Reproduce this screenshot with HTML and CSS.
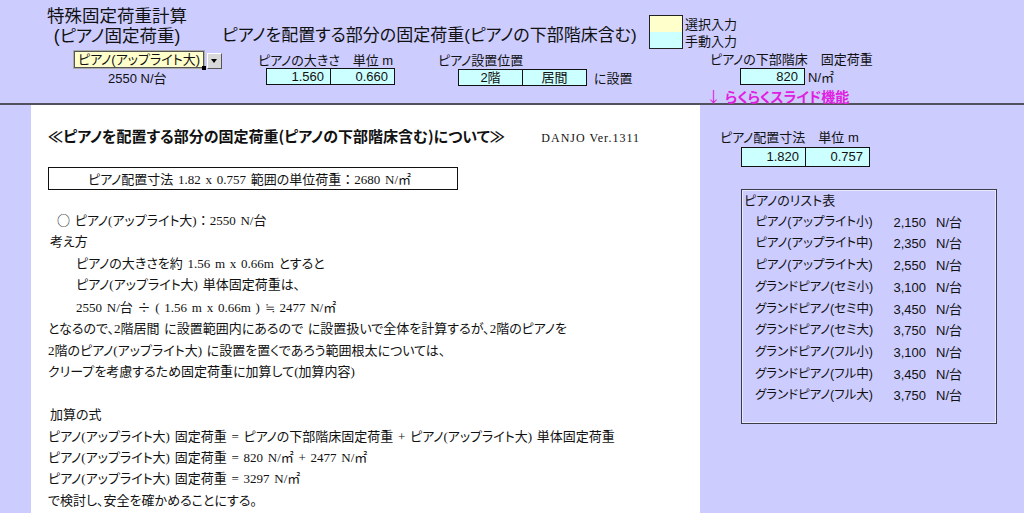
FILE: index.html
```html
<!DOCTYPE html>
<html lang="ja">
<head>
    <meta charset="UTF-8">
    <meta name="viewport" content="width=device-width, initial-scale=1.0">
    <title>特殊固定荷重計算</title>
    <link rel="stylesheet" href="styles.css">
</head>
<body>
    <header class="top">
        <div class="brand">
            <h1>特殊固定荷重計算<br>(ピアノ固定荷重)</h1>
            <div class="select">
                <span class="select-box">ピアノ(アップライト大)</span>
                <span class="select-btn"></span>
            </div>
            <div class="select-value">2550 N/台</div>
        </div>

        <div class="main-head">
            <h2>ピアノを配置する部分の固定荷重(ピアノの下部階床含む)</h2>
            <div class="fields">
                <div class="field field-size">
                    <div class="label">ピアノの大きさ　単位 m</div>
                    <div class="cells">
                        <span class="cell num">1.560</span>
                        <span class="cell num">0.660</span>
                    </div>
                </div>
                <div class="field field-place">
                    <div class="label">ピアノ設置位置</div>
                    <div class="cells">
                        <span class="cell center">2階</span>
                        <span class="cell center">居間</span>
                        <span class="after">に設置</span>
                    </div>
                </div>
            </div>
        </div>

        <div class="side-head">
            <div class="legend">
                <div class="legend-row"><span class="swatch yellow"></span>選択入力</div>
                <div class="legend-row"><span class="swatch cyan"></span>手動入力</div>
            </div>
            <div class="field field-floor">
                <div class="label">ピアノの下部階床　固定荷重</div>
                <div class="cells">
                    <span class="cell num">820</span>
                    <span class="after unit">N/㎡</span>
                </div>
            </div>
            <div class="slide"><span class="arrow">↓</span> らくらくスライド機能</div>
        </div>
    </header>

    <div class="content">
        <div class="gutter"></div>

        <div class="sheet">
            <div class="sheet-head">
                <h3>≪ピアノを配置する部分の固定荷重(ピアノの下部階床含む)について≫</h3>
                <span class="version">DANJO Ver.1311</span>
            </div>
            <div class="summary">ピアノ配置寸法 1.82 x 0.757 範囲の単位荷重<span class="wide">：</span>2680 N/㎡</div>

            <div class="text">
                <p class="mark"><span class="wide">○</span> ピアノ(アップライト大)<span class="wide">：</span>2550 N/台</p>
                <p class="sub">考え方</p>
                <p class="indent">ピアノの大きさを約 1.56 m x 0.66m とすると</p>
                <p class="indent">ピアノ(アップライト大) 単体固定荷重は、</p>
                <p class="indent">2550 N/台 <span class="wide">÷</span> ( 1.56 m x 0.66m ) <span class="wide">≒</span> 2477 N/㎡</p>
                <p>となるので、2階居間 に設置範囲内にあるので に設置扱いで全体を計算するが、2階のピアノを</p>
                <p>2階のピアノ(アップライト大) に設置を置くであろう範囲根太については、</p>
                <p>クリープを考慮するため固定荷重に加算して(加算内容)</p>
                <p class="blank">&nbsp;</p>
                <p class="sub">加算の式</p>
                <p>ピアノ(アップライト大) 固定荷重 = ピアノの下部階床固定荷重 + ピアノ(アップライト大) 単体固定荷重</p>
                <p>ピアノ(アップライト大) 固定荷重 = 820 N/㎡ + 2477 N/㎡</p>
                <p>ピアノ(アップライト大) 固定荷重 = 3297 N/㎡</p>
                <p>で検討し、安全を確かめることにする。</p>
            </div>
        </div>

        <aside class="side">
            <div class="field field-dim">
                <div class="label">ピアノ配置寸法　単位 m</div>
                <div class="cells">
                    <span class="cell num">1.820</span>
                    <span class="cell num">0.757</span>
                </div>
            </div>

            <div class="list">
                <div class="list-title">ピアノのリスト表</div>
                <div class="list-row"><span class="name">ピアノ(アップライト小)</span><span class="val">2,150</span><span class="unit">N/台</span></div>
                <div class="list-row"><span class="name">ピアノ(アップライト中)</span><span class="val">2,350</span><span class="unit">N/台</span></div>
                <div class="list-row"><span class="name">ピアノ(アップライト大)</span><span class="val">2,550</span><span class="unit">N/台</span></div>
                <div class="list-row"><span class="name">グランドピアノ(セミ小)</span><span class="val">3,100</span><span class="unit">N/台</span></div>
                <div class="list-row"><span class="name">グランドピアノ(セミ中)</span><span class="val">3,450</span><span class="unit">N/台</span></div>
                <div class="list-row"><span class="name">グランドピアノ(セミ大)</span><span class="val">3,750</span><span class="unit">N/台</span></div>
                <div class="list-row"><span class="name">グランドピアノ(フル小)</span><span class="val">3,100</span><span class="unit">N/台</span></div>
                <div class="list-row"><span class="name">グランドピアノ(フル中)</span><span class="val">3,450</span><span class="unit">N/台</span></div>
                <div class="list-row"><span class="name">グランドピアノ(フル大)</span><span class="val">3,750</span><span class="unit">N/台</span></div>
            </div>
        </aside>
    </div>
</body>
</html>
```

FILE: styles.css
```css
body {
    margin: 0;
    width: 1024px;
    height: 513px;
    overflow: hidden;
    background-color: #ccccff;
    color: #111;
    font-family: "Liberation Sans", "Noto Sans CJK JP", sans-serif;
    font-feature-settings: "palt";
    font-size: 13px;
}
h1, h2, h3, p {
    margin: 0;
    font-weight: normal;
}

/* top bar */
.top {
    display: flex;
    height: 103px;
    border-bottom: 2px solid #52525e;
    box-sizing: content-box;
}
.brand {
    width: 175px;
    padding-left: 47px;
}
.brand h1 {
    width: 140px;
    padding-top: 6px;
    font-size: 17.5px;
    line-height: 20px;
    text-align: center;
    white-space: nowrap;
}
.select {
    display: flex;
    margin: 5px 0 0 27px;
    height: 17px;
}
.select-box {
    position: relative;
    width: 128px;
    height: 15px;
    line-height: 15px;
    background-color: #ffffcc;
    border: 1px solid #555;
    box-shadow: 0 0 0 1px #aaa;
    text-align: center;
    font-size: 13px;
}
.select-box::after {
    content: "";
    position: absolute;
    right: -3px;
    bottom: -3px;
    width: 4px;
    height: 4px;
    background-color: #000;
}
.select-btn {
    position: relative;
    width: 13px;
    height: 14px;
    margin: 2px 0 0 3px;
    background-color: #d8d8d8;
    border: 1px solid #fff;
    border-right-color: #555;
    border-bottom-color: #555;
}
.select-btn::after {
    content: "";
    position: absolute;
    left: 3px;
    top: 5px;
    border-left: 3px solid transparent;
    border-right: 3px solid transparent;
    border-top: 4px solid #000;
}
.select-value {
    margin: 4px 0 0 61px;
    font-size: 13px;
    line-height: 14px;
}

.main-head {
    width: 427px;
}
.main-head h2 {
    padding-top: 26px;
    font-size: 17px;
    line-height: 20px;
}
.fields {
    display: flex;
    margin-top: 7px;
}
.field .label {
    font-size: 13px;
    line-height: 15px;
}
.cells {
    display: flex;
    align-items: center;
}
.cell {
    box-sizing: border-box;
    width: 65px;
    height: 17px;
    line-height: 15px;
    background-color: #ccffff;
    border: 1px solid #111;
    font-size: 13px;
}
.cell + .cell {
    border-left: none;
    width: 64px;
}
.cell.num {
    text-align: right;
    padding-right: 6px;
}
.cell.center {
    text-align: center;
}
.after {
    margin-left: 7px;
}
.after.unit {
    margin-left: 3px;
}
.field-size {
    width: 180px;
    margin-left: 36px;
}
.field-size .cells {
    margin-left: 8px;
}
.field-place .cells {
    margin-left: 20px;
}

.legend {
    padding-top: 15px;
}
.legend-row {
    display: flex;
    align-items: center;
    height: 17px;
    font-size: 13px;
}
.swatch {
    box-sizing: border-box;
    width: 34px;
    height: 18px;
    margin-right: 2px;
    border: 1px solid #222;
}
.legend-row + .legend-row .swatch {
    border-top: none;
    height: 17px;
}
.swatch.yellow {
    background-color: #ffffcc;
}
.swatch.cyan {
    background-color: #ccffff;
}
.field-floor {
    margin: 3px 0 0 61px;
}
.field-floor .cells {
    margin-left: 30px;
}
.slide {
    margin: 1px 0 0 57px;
    color: #e020e0;
    font-weight: bold;
    font-size: 14px;
    line-height: 17px;
}
.slide .arrow {
    font-family: "Noto Sans CJK JP", sans-serif;
    font-weight: normal;
    font-size: 15px;
}

/* lower area */
.content {
    display: flex;
    height: 408px;
}
.gutter {
    width: 31px;
}
.sheet {
    width: 652px;
    padding: 20px 0 0 17px;
    background-color: #fff;
    font-family: "Liberation Serif", "Noto Sans CJK JP", serif;
    word-spacing: 1.5px;
}
.wide {
    font-family: "Noto Sans CJK JP", sans-serif;
    font-feature-settings: normal;
}
.sheet-head {
    display: flex;
    align-items: baseline;
    width: 592px;
    justify-content: space-between;
    word-spacing: 0;
}
.sheet-head h3 {
    font-family: "Noto Sans CJK JP", sans-serif;
    font-weight: bold;
    font-size: 15px;
    line-height: 22px;
}
.version {
    font-size: 12px;
    letter-spacing: 1px;
}
.summary {
    box-sizing: border-box;
    width: 410px;
    height: 23px;
    margin-top: 20px;
    padding-left: 39px;
    border: 1px solid #111;
    line-height: 21px;
    font-size: 13px;
}
.text {
    margin-top: 19px;
    font-size: 13px;
    line-height: 21.45px;
}
.text .mark {
    padding-left: 9px;
}
.text .sub {
    padding-left: 2px;
}
.text .indent {
    padding-left: 28px;
}

.side {
    flex: 1;
    padding: 24px 0 0 20px;
}
.field-dim .label {
    line-height: 17px;
}
.field-dim .cells {
    margin: 1px 0 0 21px;
}
.field-dim .cell {
    height: 20px;
    line-height: 18px;
}
.list {
    box-sizing: border-box;
    width: 256px;
    height: 235px;
    margin: 22px 0 0 21px;
    border: 1px solid #3c3c48;
    box-shadow: inset 0 0 0 1px #e8e8ff;
    font-size: 13px;
    line-height: 21.7px;
}
.list-title {
    padding-left: 2px;
}
.list-row {
    display: flex;
}
.list-row .name {
    width: 124px;
    margin-left: 10px;
    text-align: center;
    font-size: 12.5px;
}
.list-row .val {
    width: 50px;
    text-align: right;
}
.list-row .unit {
    margin-left: 10px;
}
```
